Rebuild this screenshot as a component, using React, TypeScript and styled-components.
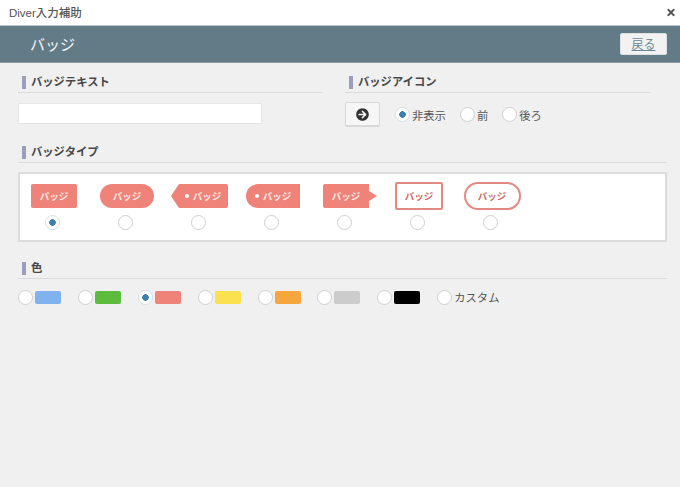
import React from 'react';
import styled, { createGlobalStyle, css } from 'styled-components';
import { FaArrowCircleRight, FaTimes } from 'react-icons/fa';

const GlobalStyle = createGlobalStyle`
  html, body {
    margin: 0;
    padding: 0;
    background: #f0f0f0;
    font-family: "Liberation Sans", "Noto Sans CJK JP", sans-serif;
    color: #444;
  }
  * { box-sizing: border-box; }
`;

type BadgeKind = 'square' | 'round' | 'tagLeft' | 'roundLeft' | 'tagRight' | 'outline' | 'outlineRound';

const badges: { kind: BadgeKind; dot?: boolean; shift: number; width: number }[] = [
  { kind: 'square', shift: 1.5, width: 46 },
  { kind: 'round', shift: 1.5, width: 54 },
  { kind: 'tagLeft', dot: true, shift: 4.5, width: 49 },
  { kind: 'roundLeft', dot: true, shift: 1.5, width: 54 },
  { kind: 'tagRight', shift: 1.5, width: 46 },
  { kind: 'outline', shift: 1.5, width: 48 },
  { kind: 'outlineRound', shift: 1.5, width: 57 },
];

const colors = ['#7fb2ee', '#5dbb3e', '#ef8379', '#fbe04f', '#f5a63c', '#cccccc', '#000000'];

export default function App() {
  return (
    <Page>
      <GlobalStyle />
      <TitleBar>
        <TitleText>Diver入力補助</TitleText>
        <CloseIcon />
      </TitleBar>
      <Header>
        <HeaderTitle>バッジ</HeaderTitle>
        <BackButton>戻る</BackButton>
      </Header>
      <Content>
        <TopRow>
          <Section>
            <Heading>バッジテキスト</Heading>
            <TextField type="text" />
          </Section>
          <Section>
            <Heading>バッジアイコン</Heading>
            <IconRow>
              <IconButton>
                <FaArrowCircleRight size={13} />
              </IconButton>
              <RadioLabel>
                <Radio name="icon" defaultChecked />
                非表示
              </RadioLabel>
              <RadioLabel>
                <Radio name="icon" />
                前
              </RadioLabel>
              <RadioLabel>
                <Radio name="icon" />
                後ろ
              </RadioLabel>
            </IconRow>
          </Section>
        </TopRow>

        <TypeSection>
          <Heading>バッジタイプ</Heading>
          <TypeBox>
            {badges.map((b, i) => (
              <TypeItem key={b.kind}>
                <BadgeSlot>
                  <Badge $kind={b.kind} $shift={b.shift} $width={b.width}>
                    {b.dot && <Dot />}
                    バッジ
                  </Badge>
                </BadgeSlot>
                <Radio name="type" defaultChecked={i === 0} />
              </TypeItem>
            ))}
          </TypeBox>
        </TypeSection>

        <ColorSection>
          <Heading>色</Heading>
          <ColorRow>
            {colors.map((c, i) => (
              <ColorOption key={c}>
                <Radio name="color" defaultChecked={i === 2} />
                <Swatch $color={c} />
              </ColorOption>
            ))}
            <RadioLabel>
              <Radio name="color" />
              カスタム
            </RadioLabel>
          </ColorRow>
        </ColorSection>
      </Content>
    </Page>
  );
}

const Page = styled.div`
  width: 680px;
  height: 487px;
  overflow: hidden;
  background: #f0f0f0;
`;

const TitleBar = styled.div`
  height: 26px;
  background: #fff;
  display: flex;
  align-items: center;
  justify-content: space-between;
  padding: 0 4px 1px 9px;
  border-bottom: 1px solid #b9c4ca;
`;

const TitleText = styled.span`
  font-size: 11.5px;
  font-weight: 500;
  color: #555;
`;

const CloseIcon = styled(FaTimes)`
  width: 10px;
  height: 11px;
  color: #555;
`;

const Header = styled.div`
  height: 37px;
  background: #637b87;
  display: flex;
  align-items: center;
  justify-content: space-between;
  padding: 0 13px 1px 30px;
  border-bottom: 1px solid #8b9ca5;
`;

const HeaderTitle = styled.h1`
  margin: 0;
  font-size: 15px;
  font-weight: 400;
  color: #f2f5f6;
`;

const BackButton = styled.button`
  width: 47px;
  height: 22px;
  padding: 0;
  background: #f2f2f2;
  border: 1px solid #dde1e3;
  border-radius: 2px;
  font: inherit;
  font-size: 12px;
  color: #6c8796;
  text-decoration: underline;
`;

const Content = styled.div`
  padding: 11px 13px 0 18px;
`;

const TopRow = styled.div`
  display: grid;
  grid-template-columns: 304px 305px;
  column-gap: 23px;
`;

const Section = styled.section`
  min-width: 0;
`;

const Heading = styled.h2`
  margin: 0;
  height: 19px;
  padding-left: 4px;
  display: flex;
  align-items: center;
  gap: 5px;
  font-size: 11.3px;
  line-height: 14px;
  font-weight: 700;
  color: #484848;
  border-bottom: 1px solid #dcdcdc;
  padding-bottom: 2px;

  &::before {
    content: '';
    width: 4px;
    height: 13px;
    background: #9c9cbd;
  }
`;

const TextField = styled.input`
  display: block;
  width: 244px;
  height: 21px;
  margin-top: 10px;
  padding: 0 4px;
  background: #fff;
  border: 1px solid #e6e6e6;
  outline: none;
`;

const IconRow = styled.div`
  display: flex;
  align-items: center;
  margin-top: 9px;
  gap: 14px;
`;

const IconButton = styled.button`
  width: 35px;
  height: 25px;
  margin-right: 1px;
  padding: 0;
  display: flex;
  align-items: center;
  justify-content: center;
  background: #f6f6f6;
  border: 1px solid #d8d8d8;
  border-bottom-width: 2px;
  border-radius: 2px;
  color: #333;
`;

const RadioLabel = styled.label`
  display: inline-flex;
  align-items: center;
  gap: 2px;
  font-size: 11.3px;
  color: #555;
`;

const Radio = styled.input.attrs({ type: 'radio' })`
  appearance: none;
  margin: 0;
  flex: none;
  width: 15px;
  height: 15px;
  border-radius: 50%;
  border: 1.5px solid #cfcfcf;
  background: #fff;

  &:checked {
    border-color: #d3dfe8;
    background: radial-gradient(circle, #3e80ad 0 3px, #fff 3.5px);
  }
`;

const TypeSection = styled.section`
  margin-top: 17px;
`;

const TypeBox = styled.div`
  height: 70px;
  margin-top: 9px;
  display: flex;
  gap: 8px;
  background: #fff;
  border: 2px solid #dcdcdc;
  width: 649px;
  align-items: flex-start;
`;

const TypeItem = styled.div`
  width: 65px;
  flex: none;
  display: flex;
  flex-direction: column;
  align-items: center;
  gap: 5px;
  padding-top: 8px;
`;

const BadgeSlot = styled.div`
  width: 100%;
  height: 28px;
  display: flex;
  align-items: center;
  justify-content: center;
`;

const badgeShape = {
  square: css`
    border-radius: 2px;
  `,
  round: css`
    border-radius: 13px;
  `,
  tagLeft: css`
    border-radius: 0 2px 2px 0;
    &::before {
      content: '';
      position: absolute;
      left: -8px;
      top: 0;
      border-style: solid;
      border-width: 12px 8px 12px 0;
      border-color: transparent #ef8379 transparent transparent;
    }
  `,
  roundLeft: css`
    border-radius: 12px 0 0 12px;
  `,
  tagRight: css`
    border-radius: 2px 0 0 2px;
    &::after {
      content: '';
      position: absolute;
      right: -8px;
      top: 7px;
      border-style: solid;
      border-width: 5px 0 5px 8px;
      border-color: transparent transparent transparent #ef8379;
    }
  `,
  outline: css`
    height: 28px;
    background: #fff;
    color: #c96b63;
    border: 2px solid #e28a81;
    border-radius: 2px;
  `,
  outlineRound: css`
    height: 28px;
    background: #fff;
    color: #c96b63;
    border: 2px solid #e28a81;
    border-radius: 14px;
  `,
};

const Badge = styled.span<{ $kind: BadgeKind; $shift: number; $width: number }>`
  position: relative;
  flex: none;
  width: ${(p) => p.$width}px;
  height: 24px;
  margin-left: ${(p) => p.$shift * 2}px;
  display: inline-flex;
  align-items: center;
  justify-content: center;
  gap: 4px;
  background: #ef8379;
  color: #fde9e6;
  font-size: 9.5px;
  font-weight: 700;
  ${(p) => badgeShape[p.$kind]}
`;

const Dot = styled.i`
  width: 4px;
  height: 4px;
  border-radius: 50%;
  background: #fff;
`;

const ColorSection = styled.section`
  margin-top: 18px;
`;

const ColorRow = styled.div`
  display: flex;
  align-items: center;
  margin-top: 10px;
  gap: 16.9px;
`;

const ColorOption = styled.label`
  display: inline-flex;
  align-items: center;
  gap: 2px;
`;

const Swatch = styled.span<{ $color: string }>`
  width: 26px;
  height: 13px;
  border-radius: 2px;
  background: ${(p) => p.$color};
`;
